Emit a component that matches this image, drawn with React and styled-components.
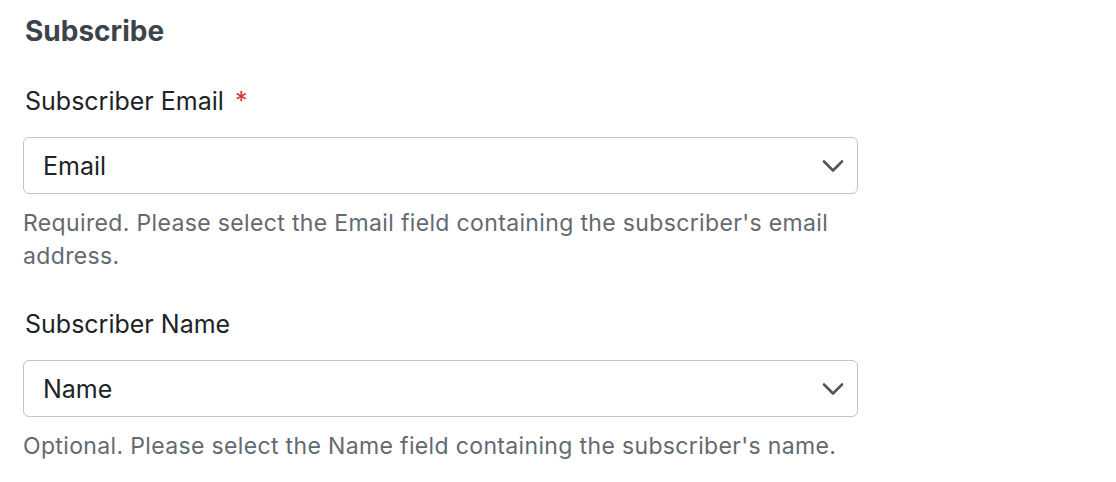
import styled, { createGlobalStyle } from 'styled-components';

const GlobalStyle = createGlobalStyle`
    body {
        margin: 0;
        background: #fff;
        font-family: Inter, "Liberation Sans", Arial, sans-serif;
    }
`;

const Panel = styled.div`
    display: flex;
    flex-direction: column;
    width: 835px;
    padding: 14px 0 0 23px;
`;

const Heading = styled.h2`
    margin: 0 0 37px 2px;
    font-size: 28px;
    line-height: 34px;
    font-weight: 700;
    color: #3c434a;
`;

const Field = styled.div`
    display: flex;
    flex-direction: column;
    margin-bottom: ${props => props.gap || 0}px;
`;

const Label = styled.label`
    margin: 0 0 20px 2px;
    font-size: 25px;
    line-height: 32px;
    color: #1d2327;
`;

const Required = styled.span`
    color: #d63638;
    margin-left: 11px;
`;

const SelectBox = styled.div`
    display: flex;
    align-items: center;
    justify-content: space-between;
    box-sizing: border-box;
    height: 57px;
    padding: 0 13px 0 19px;
    border: 1px solid #c3c4c7;
    border-radius: 6px;
    background: #fff;
    font-size: 25px;
    color: #1d2327;
`;

const Help = styled.p`
    margin: 13px 0 0;
    font-size: 23px;
    line-height: 33px;
    letter-spacing: 0.35px;
    color: #646970;
`;

const Chevron = () => (
    <svg width="22" height="14" viewBox="0 0 22 14" fill="none">
        <path d="M2 2.5l9 9 9-9" stroke="#50575e" strokeWidth="2.6" strokeLinecap="round" strokeLinejoin="round" />
    </svg>
);

const fields = [
    {
        label: 'Subscriber Email',
        required: true,
        value: 'Email',
        help: "Required. Please select the Email field containing the subscriber's email address.",
    },
    {
        label: 'Subscriber Name',
        value: 'Name',
        help: "Optional. Please select the Name field containing the subscriber's name.",
    },
];

export default function App() {
    return (
        <>
            <GlobalStyle />
            <Panel>
                <Heading>Subscribe</Heading>
                {fields.map((f, i) => (
                    <Field key={f.label} gap={i === 0 ? 35 : 0}>
                        <Label>
                            {f.label}
                            {f.required && <Required>*</Required>}
                        </Label>
                        <SelectBox>
                            <span>{f.value}</span>
                            <Chevron />
                        </SelectBox>
                        <Help>{f.help}</Help>
                    </Field>
                ))}
            </Panel>
        </>
    );
}
